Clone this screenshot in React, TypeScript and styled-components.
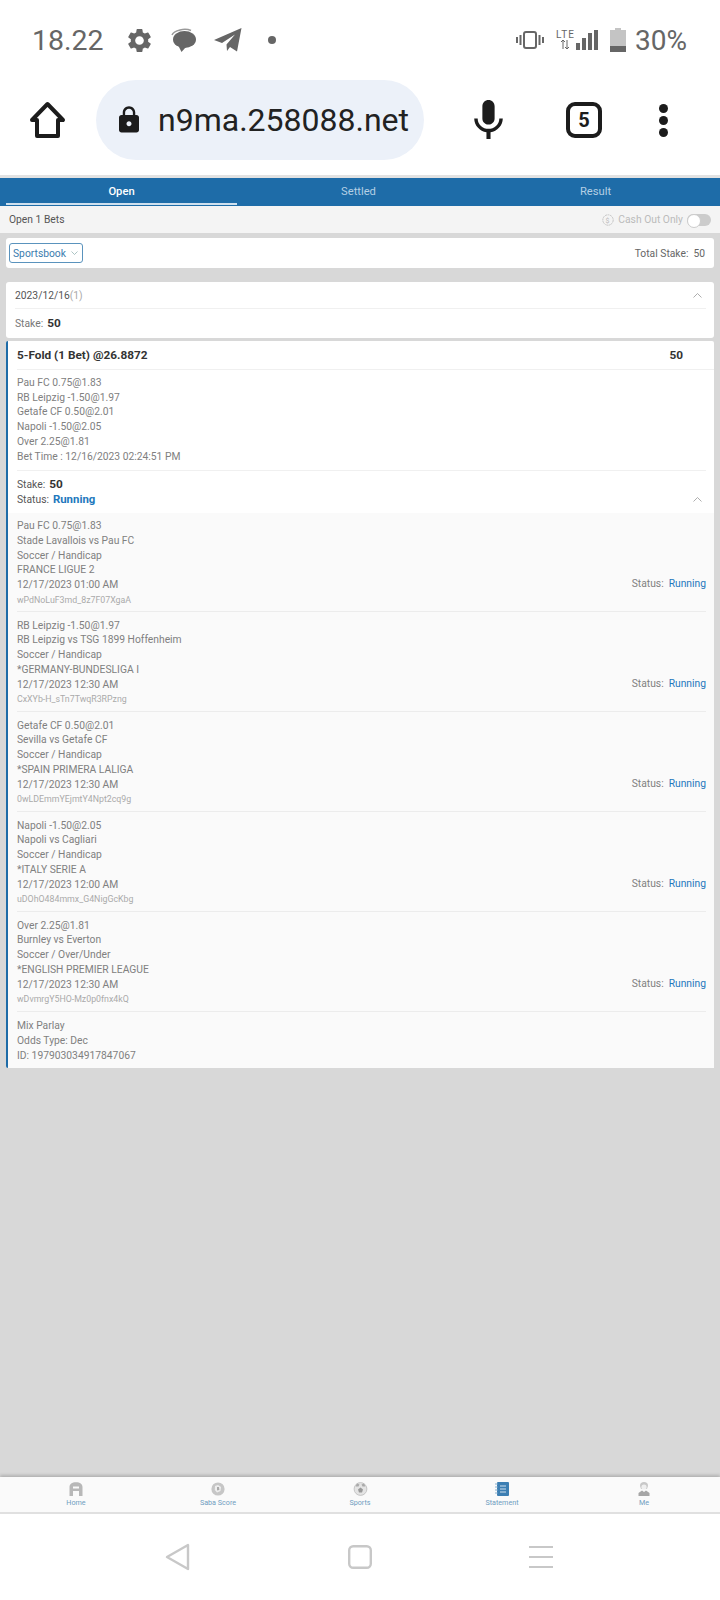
import React from "react";
import styled, { createGlobalStyle } from "styled-components";
import { MdSettings, MdLock, MdMic } from "react-icons/md";

const GlobalStyle = createGlobalStyle`
html, body {
    margin: 0;
    padding: 0;
    background: #fff;
}
* {
    box-sizing: border-box;
}
`;

const Page = styled.div`
width: 720px;
height: 1600px;
display: flex;
flex-direction: column;
font-family: Roboto, "Liberation Sans", sans-serif;
overflow: hidden;
`;

const StatusBar = styled.div`
height: 80px;
padding: 0 33px 0 32px;
display: flex;
align-items: center;
justify-content: space-between;
color: #666;
`;

const StatusText = styled.span`
font-size: 28.5px;
`;

const Percent = styled.span`
font-size: 28px;
`;

const StatusGroup = styled.div`
display: flex;
align-items: center;
`;

const Slot = styled.span<{ $left: number }>`
display: flex;
align-items: center;
margin-left: ${(p) => p.$left}px;
`;

const Dot = styled.span`
width: 8px;
height: 8px;
border-radius: 50%;
background: #666;
margin-left: 26px;
`;

const BrowserBar = styled.div`
height: 95px;
display: flex;
align-items: flex-start;
padding-left: 29px;
`;

const HomeBtn = styled.div`
width: 37px;
height: 80px;
display: flex;
align-items: center;
margin-right: 30px;
`;

const UrlPill = styled.div`
width: 328px;
height: 80px;
border-radius: 40px;
background: #ecf1f9;
display: flex;
align-items: center;
padding-left: 18px;
color: #222;
font-size: 32px;
gap: 14px;
`;

const BarIcons = styled.div`
height: 80px;
display: flex;
align-items: center;
padding-left: 40px;
`;

const TabCount = styled.div`
width: 36px;
height: 36px;
border: 4px solid #1c1c1c;
border-radius: 9px;
margin-left: 53px;
margin-right: 57px;
display: flex;
align-items: center;
justify-content: center;
font-size: 20px;
font-weight: 700;
color: #1c1c1c;
`;

const Kebab = styled.div`
display: flex;
flex-direction: column;
gap: 3px;

span {
    width: 9px;
    height: 9px;
    border-radius: 50%;
    background: #1c1c1c;
}
`;

const Main = styled.div`
flex: 1;
background: #d8d8d8;
display: flex;
flex-direction: column;
border-top: 3px solid #e2e2e2;
`;

const Tabs = styled.div`
height: 28px;
background: #1e6ca8;
padding: 0 6px;
display: grid;
grid-template-columns: repeat(3, 231px);
column-gap: 6px;
`;

const Tab = styled.div<{ $active?: boolean }>`
display: flex;
align-items: center;
justify-content: center;
font-size: 11.2px;
padding-top: 1px;
color: ${(p) => (p.$active ? "#fff" : "#b4cfe4")};
font-weight: ${(p) => (p.$active ? 500 : 400)};
border-bottom: 2px solid ${(p) => (p.$active ? "#cfe0ee" : "transparent")};
height: 27px;
`;

const SubBar = styled.div`
height: 27px;
background: #f4f4f4;
padding: 0 9px;
display: flex;
align-items: center;
justify-content: space-between;
font-size: 10.3px;
color: #555;
margin-bottom: 5px;
`;

const CashOut = styled.div`
display: flex;
align-items: center;
color: #bbb;
gap: 4px;
`;

const Toggle = styled.span`
display: block;
width: 24px;
height: 12px;
border-radius: 6px;
background: #ccc;
position: relative;

&::after {
    content: "";
    position: absolute;
    left: 0;
    top: 0;
    width: 12px;
    height: 12px;
    border-radius: 50%;
    background: #fff;
    border: 1px solid #ccc;
}
`;

const FilterCard = styled.div`
margin: 0 6px 14px;
height: 30px;
background: #fff;
border-radius: 3px;
display: flex;
align-items: center;
justify-content: space-between;
padding: 0 9px 0 3px;
font-size: 10.3px;
color: #666;
`;

const Dropdown = styled.div`
width: 74px;
height: 20px;
border: 1px solid #5a93bd;
border-radius: 3px;
color: #3b7cae;
display: flex;
align-items: center;
gap: 5px;
padding-left: 3px;
`;

const TotalStake = styled.div`
display: flex;
gap: 5px;
`;

const DateCard = styled.div`
margin: 0 6px 3px;
height: 56px;
background: #fff;
border-radius: 3px;
padding: 0 8px 0 9px;
`;

const DateRow = styled.div`
height: 27px;
border-bottom: 1px solid #f0f0f0;
display: flex;
align-items: center;
justify-content: space-between;
font-size: 10.3px;
color: #555;
padding-right: 4px;
`;

const Muted = styled.span`
color: #aaa;
`;

const StakeRow = styled.div`
height: 28px;
display: flex;
align-items: center;
gap: 4px;
font-size: 10.3px;
color: #777;
`;

const Strong = styled.strong`
font-size: 11.8px;
font-weight: 700;
color: #333;
`;

const BetCard = styled.div`
margin: 0 6px;
background: #fff;
border-left: 2px solid #1e6ca8;
border-radius: 2px;
`;

const BetHead = styled.div`
height: 29px;
margin-left: 9px;
padding-right: 31px;
border-bottom: 1px solid #f0f0f0;
display: flex;
align-items: center;
justify-content: space-between;
font-size: 11.8px;
font-weight: 700;
color: #333;
`;

const Summary = styled.div`
margin: 0 8px 0 9px;
padding: 6px 0 6px;
border-bottom: 1px solid #f0f0f0;
`;

const Line = styled.div`
font-size: 10.3px;
line-height: 14.7px;
color: #808080;
white-space: nowrap;
`;

const Code = styled.div`
font-size: 8.8px;
line-height: 14px;
color: #aaa;
white-space: nowrap;
`;

const StakeBlock = styled.div`
height: 42px;
padding: 5.5px 12px 0 9px;
`;

const StakeLine = styled.div`
display: flex;
align-items: center;
gap: 4px;
height: 15px;
font-size: 10.3px;
color: #555;

svg {
    margin-left: auto;
}
`;

const RunningBold = styled.span`
font-size: 11.4px;
font-weight: 700;
color: #1e78bd;
`;

const Legs = styled.div`
background: #fafafa;
`;

const Leg = styled.div`
height: 100px;
margin: 0 8px 0 9px;
padding-top: 6.5px;
border-bottom: 1px solid #ececec;
display: flex;
justify-content: space-between;
align-items: flex-end;

&:first-child {
    height: 99px;
    padding-top: 6px;
}
`;

const LegText = styled.div`
align-self: flex-start;
`;

const LegStatus = styled.div`
display: flex;
gap: 5px;
font-size: 10.3px;
line-height: 15px;
color: #808080;
margin-bottom: 20px;
`;

const Running = styled.span`
color: #1e78bd;
`;

const Footer = styled.div`
margin-left: 9px;
padding: 7px 0 5px;
`;

const Spacer = styled.div`
flex: 1;
`;

const BottomNav = styled.div`
height: 37px;
background: #fafafa;
border-bottom: 2px solid #e0e0e0;
box-shadow: 0 -2px 3px rgba(0, 0, 0, 0.18);
display: grid;
grid-template-columns: repeat(5, 142px);
padding-left: 5px;
`;

const NavItem = styled.div`
display: flex;
flex-direction: column;
align-items: center;
padding-top: 5px;
font-size: 7.2px;
color: #6f9dbf;
line-height: 13px;
`;

const SystemNav = styled.div`
height: 86px;
background: #fff;
display: flex;
align-items: center;
gap: 157px;
padding-left: 165px;
`;

const legs = [
    ["Pau FC 0.75@1.83", "Stade Lavallois vs Pau FC", "Soccer / Handicap", "FRANCE LIGUE 2", "12/17/2023 01:00 AM", "wPdNoLuF3md_8z7F07XgaA"],
    ["RB Leipzig -1.50@1.97", "RB Leipzig vs TSG 1899 Hoffenheim", "Soccer / Handicap", "*GERMANY-BUNDESLIGA I", "12/17/2023 12:30 AM", "CxXYb-H_sTn7TwqR3RPzng"],
    ["Getafe CF 0.50@2.01", "Sevilla vs Getafe CF", "Soccer / Handicap", "*SPAIN PRIMERA LALIGA", "12/17/2023 12:30 AM", "0wLDEmmYEjmtY4Npt2cq9g"],
    ["Napoli -1.50@2.05", "Napoli vs Cagliari", "Soccer / Handicap", "*ITALY SERIE A", "12/17/2023 12:00 AM", "uDOhO484mmx_G4NigGcKbg"],
    ["Over 2.25@1.81", "Burnley vs Everton", "Soccer / Over/Under", "*ENGLISH PREMIER LEAGUE", "12/17/2023 12:30 AM", "wDvmrgY5HO-Mz0p0fnx4kQ"],
];

const ChevronDown: React.FC = () => (
    <svg width="7" height="4" viewBox="0 0 7 4" fill="none" stroke="#8aa" strokeWidth="0.7">
        <path d="M0.5 0.5 L3.5 3.5 L6.5 0.5" />
    </svg>
);

const ChevronUp: React.FC = () => (
    <svg width="9" height="5" viewBox="0 0 9 5" fill="none" stroke="#999" strokeWidth="0.8">
        <path d="M0.5 4.5 L4.5 0.5 L8.5 4.5" />
    </svg>
);

const App: React.FC = () => {
    return (
        <Page>
            <GlobalStyle />
            <StatusBar>
                <StatusGroup>
                    <StatusText>18.22</StatusText>
                    <Slot $left={21}>
                        <MdSettings size={29} />
                    </Slot>
                    <Slot $left={17}>
                        <svg width="26" height="25" viewBox="0 0 26 25" fill="#666">
                            <path d="M1 7 C3 2 14 0 20 2.5" fill="none" stroke="#999" strokeWidth="1.5" />
                            <ellipse cx="13.5" cy="11.5" rx="11.5" ry="8.5" />
                            <path d="M7 17 L10.5 24 L15 19Z" />
                        </svg>
                    </Slot>
                    <Slot $left={17}>
                        <svg width="28" height="24" viewBox="0 0 28 24" fill="#666">
                            <path d="M27.5 0 L0 12 L8 15 L21 6.5 L12.5 16.5 L13 23 L16 19 L23 23.5Z" />
                        </svg>
                    </Slot>
                    <Dot />
                </StatusGroup>
                <StatusGroup>
                    <svg width="28" height="18" viewBox="0 0 28 18" fill="none" stroke="#666">
                        <rect x="8" y="1" width="12" height="16" rx="2" strokeWidth="2" />
                        <path d="M4.5 4 V14 M1 6 V12 M23.5 4 V14 M27 6 V12" strokeWidth="2" />
                    </svg>
                    <Slot $left={12}>
                        <svg width="18" height="20" viewBox="0 0 18 20" fill="#666">
                            <text x="0" y="8" fontSize="10" fontFamily="Roboto, sans-serif" textLength="18">LTE</text>
                            <path d="M7 10 V19 M11 10 V19 M5 12 L7 10 L9 12 M9 17 L11 19 L13 17" stroke="#666" strokeWidth="1" fill="none" />
                        </svg>
                    </Slot>
                    <Slot $left={2}>
                        <svg width="22" height="20" viewBox="0 0 22 20" fill="#666">
                            <rect x="0" y="13" width="4" height="7" />
                            <rect x="6" y="8" width="4" height="12" />
                            <rect x="12" y="3" width="4" height="17" />
                            <rect x="18" y="0" width="4" height="20" />
                        </svg>
                    </Slot>
                    <Slot $left={12}>
                        <svg width="16" height="24" viewBox="0 0 16 24">
                            <rect x="0" y="2" width="16" height="22" fill="#c4c4c4" />
                            <rect x="5" y="0" width="6" height="2" fill="#c4c4c4" />
                            <rect x="0" y="18" width="16" height="6" fill="#666" />
                        </svg>
                    </Slot>
                    <Slot $left={9}>
                        <Percent>30%</Percent>
                    </Slot>
                </StatusGroup>
            </StatusBar>
            <BrowserBar>
                <HomeBtn>
                    <svg width="37" height="38" viewBox="0 0 37 38" fill="none" stroke="#1c1c1c" strokeWidth="4" strokeLinejoin="round">
                        <path d="M18.5 3 L34 19 H29 V35 H8 V19 H3Z" />
                    </svg>
                </HomeBtn>
                <UrlPill>
                    <MdLock size={30} color="#1c1c1c" />
                    <span>n9ma.258088.net</span>
                </UrlPill>
                <BarIcons>
                    <MdMic size={49} color="#1c1c1c" />
                    <TabCount>5</TabCount>
                    <Kebab>
                        <span />
                        <span />
                        <span />
                    </Kebab>
                </BarIcons>
            </BrowserBar>
            <Main>
                <Tabs>
                    <Tab $active>Open</Tab>
                    <Tab>Settled</Tab>
                    <Tab>Result</Tab>
                </Tabs>
                <SubBar>
                    <span>Open 1 Bets</span>
                    <CashOut>
                        <svg width="12" height="12" viewBox="0 0 12 12" fill="none" stroke="#bbb" strokeWidth="0.8">
                            <circle cx="6" cy="6" r="5.2" strokeDasharray="2 0.6" />
                            <text x="3.6" y="8.5" fontSize="7" fill="#bbb" stroke="none">$</text>
                        </svg>
                        <span>Cash Out Only</span>
                        <Toggle />
                    </CashOut>
                </SubBar>
                <FilterCard>
                    <Dropdown>
                        <span>Sportsbook</span>
                        <ChevronDown />
                    </Dropdown>
                    <TotalStake>
                        <span>Total Stake:</span>
                        <span>50</span>
                    </TotalStake>
                </FilterCard>
                <DateCard>
                    <DateRow>
                        <span>2023/12/16<Muted>(1)</Muted></span>
                        <ChevronUp />
                    </DateRow>
                    <StakeRow>
                        <span>Stake:</span>
                        <Strong>50</Strong>
                    </StakeRow>
                </DateCard>
                <BetCard>
                    <BetHead>
                        <span>5-Fold (1 Bet) @26.8872</span>
                        <span>50</span>
                    </BetHead>
                    <Summary>
                        <Line>Pau FC 0.75@1.83</Line>
                        <Line>RB Leipzig -1.50@1.97</Line>
                        <Line>Getafe CF 0.50@2.01</Line>
                        <Line>Napoli -1.50@2.05</Line>
                        <Line>Over 2.25@1.81</Line>
                        <Line>Bet Time : 12/16/2023 02:24:51 PM</Line>
                    </Summary>
                    <StakeBlock>
                        <StakeLine>
                            <span>Stake:</span>
                            <Strong>50</Strong>
                        </StakeLine>
                        <StakeLine>
                            <span>Status:</span>
                            <RunningBold>Running</RunningBold>
                            <ChevronUp />
                        </StakeLine>
                    </StakeBlock>
                    <Legs>
                        {legs.map((leg) => (
                            <Leg key={leg[5]}>
                                <LegText>
                                    {leg.slice(0, 5).map((text, i) => (
                                        <Line key={i}>{text}</Line>
                                    ))}
                                    <Code>{leg[5]}</Code>
                                </LegText>
                                <LegStatus>
                                    <span>Status:</span>
                                    <Running>Running</Running>
                                </LegStatus>
                            </Leg>
                        ))}
                        <Footer>
                            <Line>Mix Parlay</Line>
                            <Line>Odds Type: Dec</Line>
                            <Line>ID: 197903034917847067</Line>
                        </Footer>
                    </Legs>
                </BetCard>
                <Spacer />
                <BottomNav>
                    <NavItem>
                        <svg width="14" height="14" viewBox="0 0 14 14" fill="#b8b8b8">
                            <path d="M0.5 14 V5 C0.5 2 3 0.3 7 0.3 S13.5 2 13.5 5 V14 H10 V9 H4 V14Z" />
                            <path d="M4 4.5 H10 V6.5 H4Z" fill="#fafafa" />
                        </svg>
                        Home
                    </NavItem>
                    <NavItem>
                        <svg width="14" height="14" viewBox="0 0 14 14">
                            <circle cx="7" cy="7" r="6.6" fill="#c6c6c6" />
                            <path d="M4 4 L7 3 L10 5 L9.5 9 L6 10.5 L3.8 8Z" fill="#eee" />
                            <path d="M6 5 L8 5 L8.4 8 L6 8.6Z" fill="#aaa" />
                        </svg>
                        Saba Score
                    </NavItem>
                    <NavItem>
                        <svg width="15" height="14" viewBox="0 0 15 14">
                            <circle cx="7.5" cy="7" r="6.4" fill="#e4e4e4" stroke="#bbb" strokeWidth="0.8" />
                            <path d="M7.5 5.5 L10 7.5 L9 10.5 H6 L5 7.5Z" fill="#999" />
                            <path d="M4 1.5 L6.5 2.5 L5.5 4.5 L2.5 4.5Z M11 1.5 L8.5 2.5 L9.5 4.5 L12.5 4.5Z" fill="#aaa" />
                        </svg>
                        Sports
                    </NavItem>
                    <NavItem>
                        <svg width="14" height="14" viewBox="0 0 14 14">
                            <rect x="2" y="0" width="12" height="14" rx="1" fill="#3d7fb3" />
                            <path d="M5 4 H11 M5 7 H11 M5 10 H11" stroke="#cfe0ee" strokeWidth="1" />
                            <path d="M0 2 H3 M0 5 H3 M0 8 H3 M0 11 H3" stroke="#7aa7ca" strokeWidth="0.9" />
                        </svg>
                        Statement
                    </NavItem>
                    <NavItem>
                        <svg width="12" height="14" viewBox="0 0 12 14">
                            <path d="M2 4 C2 1 3.5 0 6 0 S10 1 10 4 L9 7 H3Z" fill="#c8c8c8" />
                            <circle cx="6" cy="5" r="2.6" fill="#efefef" />
                            <path d="M0.5 14 V11 L4 8.5 L6 10 L8 8.5 L11.5 11 V14Z" fill="#a6a6a6" />
                        </svg>
                        Me
                    </NavItem>
                </BottomNav>
                <SystemNav>
                    <svg width="26" height="28" viewBox="0 0 26 28" fill="none" stroke="#c8c8c8" strokeWidth="2.4" strokeLinejoin="round">
                        <path d="M2 14 L23 2 V26Z" />
                    </svg>
                    <svg width="24" height="24" viewBox="0 0 24 24" fill="none" stroke="#c8c8c8" strokeWidth="2.4">
                        <rect x="1.2" y="1.2" width="21.6" height="21.6" rx="4" />
                    </svg>
                    <svg width="24" height="22" viewBox="0 0 24 22" fill="none" stroke="#c8c8c8" strokeWidth="1.8">
                        <path d="M0 1 H24 M0 11 H24 M0 21 H24" />
                    </svg>
                </SystemNav>
            </Main>
        </Page>
    );
};

export default App;
